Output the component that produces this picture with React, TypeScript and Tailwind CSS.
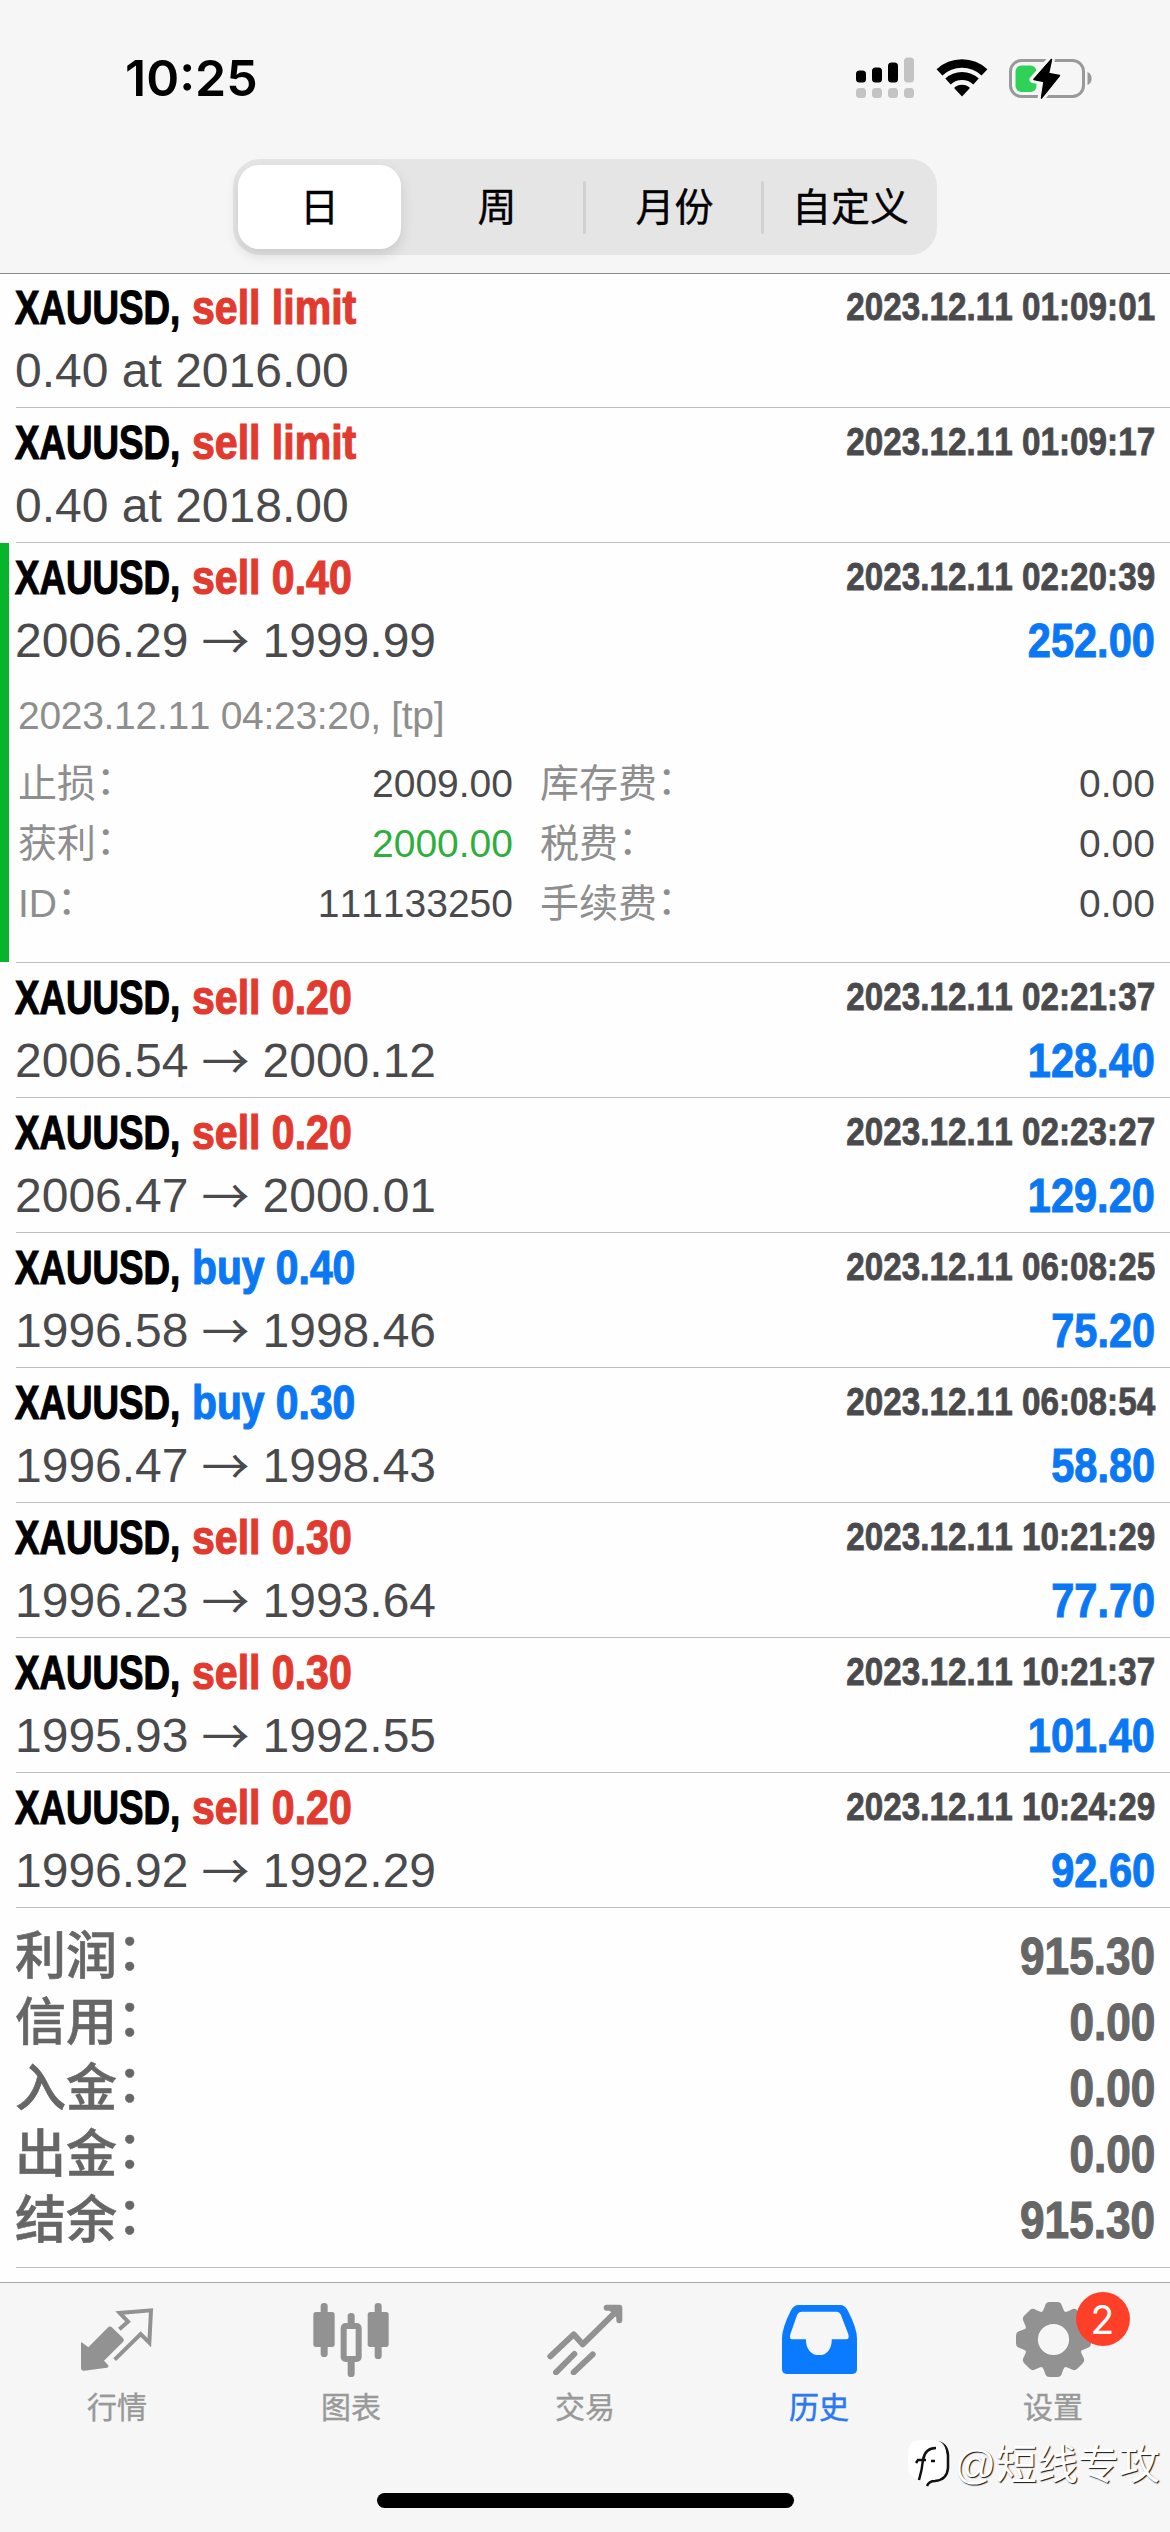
/**
 * Trade history screen.
 *
 * Period switch on top, list of closed orders and deals, the account
 * summary and the bottom tab bar.
 */

import type { ReactNode } from 'react';

interface Deal {
  action: string;
  side: 'buy' | 'sell';
  time: string;
  open?: string;
  close?: string;
  note?: string;
  profit?: string;
  expanded?: boolean;
}

const DEALS: Deal[] = [
  { action: 'sell limit', side: 'sell', time: '2023.12.11 01:09:01', note: '0.40 at 2016.00' },
  { action: 'sell limit', side: 'sell', time: '2023.12.11 01:09:17', note: '0.40 at 2018.00' },
  { action: 'sell 0.40', side: 'sell', time: '2023.12.11 02:20:39', open: '2006.29', close: '1999.99', profit: '252.00', expanded: true },
  { action: 'sell 0.20', side: 'sell', time: '2023.12.11 02:21:37', open: '2006.54', close: '2000.12', profit: '128.40' },
  { action: 'sell 0.20', side: 'sell', time: '2023.12.11 02:23:27', open: '2006.47', close: '2000.01', profit: '129.20' },
  { action: 'buy 0.40', side: 'buy', time: '2023.12.11 06:08:25', open: '1996.58', close: '1998.46', profit: '75.20' },
  { action: 'buy 0.30', side: 'buy', time: '2023.12.11 06:08:54', open: '1996.47', close: '1998.43', profit: '58.80' },
  { action: 'sell 0.30', side: 'sell', time: '2023.12.11 10:21:29', open: '1996.23', close: '1993.64', profit: '77.70' },
  { action: 'sell 0.30', side: 'sell', time: '2023.12.11 10:21:37', open: '1995.93', close: '1992.55', profit: '101.40' },
  { action: 'sell 0.20', side: 'sell', time: '2023.12.11 10:24:29', open: '1996.92', close: '1992.29', profit: '92.60' },
];

const DETAILS = [
  ['止损', '2009.00', '库存费', '0.00'],
  ['获利', '2000.00', '税费', '0.00'],
  ['ID', '111133250', '手续费', '0.00'],
];

const SUMMARY = [
  ['利润', '915.30'],
  ['信用', '0.00'],
  ['入金', '0.00'],
  ['出金', '0.00'],
  ['结余', '915.30'],
];

export default function App() {
  return (
    <div className="relative flex h-[2532px] w-[1170px] flex-col overflow-hidden bg-[#fefefe] font-['Liberation_Sans','Noto_Sans_CJK_SC',sans-serif] text-[#4a4a4d] [font-kerning:none]">
      <header className="h-[274px] shrink-0 border-b border-[#8a8a8d] bg-[#f6f6f6] pt-12">
        <StatusBar />
        <PeriodSwitch />
      </header>

      <main className="-mt-px flex-1">
        {DEALS.map((deal) => (
          <DealRow key={deal.time} deal={deal} />
        ))}
        <section className="px-[15px] pt-4 pb-[13px] text-[51px] leading-[66px] text-[#666]">
          {SUMMARY.map(([label, value]) => (
            <div key={label} className="flex justify-between">
              <span className="font-medium [-webkit-text-stroke-width:0.6px]">
                <Label text={label} />
              </span>
              <span className="origin-right scale-x-[0.865] font-bold [-webkit-text-stroke-width:1.2px]">
                {value}
              </span>
            </div>
          ))}
        </section>
        <Divider />
      </main>

      <TabBar />
      <Watermark />
    </div>
  );
}

function StatusBar() {
  return (
    <div className="flex h-15 items-center pr-[78px] pl-[125px]">
      <span className="font-['Inter',sans-serif] text-[50px] leading-[60px] font-semibold text-black">
        10:25
      </span>
      <svg className="ml-auto" width="58" height="42" viewBox="0 0 58 42">
        <g fill="#000">
          <rect x="0" y="13.5" width="10" height="12" rx="3.5" />
          <rect x="16" y="10.5" width="10" height="15" rx="3.5" />
          <rect x="32" y="5.5" width="10" height="20" rx="3.5" />
        </g>
        <g fill="#c3c3c3">
          <rect x="48" y="0.5" width="10" height="25" rx="3.5" />
          <rect x="0" y="31" width="10" height="10" rx="3.5" />
          <rect x="16" y="31" width="10" height="10" rx="3.5" />
          <rect x="32" y="31" width="10" height="10" rx="3.5" />
          <rect x="48" y="31" width="10" height="10" rx="3.5" />
        </g>
      </svg>
      <svg className="ml-[22px]" width="52" height="40" viewBox="0 0 52 40" fill="none" stroke="#000">
        <path d="M3.5 14.4A33 33 0 0 1 48.5 14.4" strokeWidth="8.6" />
        <path d="M12 23.5A20.5 20.5 0 0 1 40 23.5" strokeWidth="8" />
        <path d="M26 38.5L18.5 30.5Q18 29.500 19 29A12 12 0 0 1 33 29Q34 29.500 33.500 30.500Z" fill="#000" stroke="none" />
      </svg>
      <svg className="ml-5" width="84" height="43" viewBox="0 0 84 43">
        <rect x="2.5" y="3.5" width="73" height="36" rx="11" fill="none" stroke="#99999b" strokeWidth="3" />
        <path d="M79.5 15c5.5 2 5.5 11 0 13Z" fill="#99999b" />
        <rect x="7.5" y="8.5" width="21" height="26.5" rx="6" fill="#30d158" />
        <path
          d="M43.5 1.5L25 22.5L36 24.5L33 41.5L52 18.5L40.5 16.5Z"
          fill="#000"
          stroke="#f6f6f6"
          strokeWidth="7"
          strokeLinejoin="round"
          paintOrder="stroke"
        />
        <path
          d="M43.5 2.5L26 22.5L36 24.5L33.5 41L51.5 18.5L40.5 16.5Z"
          stroke="#000"
          strokeWidth="1.5"
          strokeLinejoin="round"
        />
      </svg>
    </div>
  );
}

function PeriodSwitch() {
  return (
    <div className="mx-auto mt-[51px] flex h-24 w-[704px] items-center rounded-[27px] bg-[#e5e5e6] text-center text-[39px] leading-[56px] text-black [-webkit-text-stroke-width:0.4px]">
      <div className="ml-[5px] flex h-[84px] w-[163px] items-center justify-center rounded-[21px] bg-white pt-0.5 shadow-[0_6px_14px_rgba(0,0,0,0.12)]">
        日
      </div>
      <div className="ml-2.5 flex-1 pt-0.5">周</div>
      <div className="h-[53px] w-[3px] rounded-full bg-[#d1d1d3]" />
      <div className="w-[175px] pt-0.5 pl-0.5">月份</div>
      <div className="h-[53px] w-[3px] rounded-full bg-[#d1d1d3]" />
      <div className="w-[173px] pt-0.5">自定义</div>
    </div>
  );
}

function Divider() {
  return <div className="ml-4 h-px bg-[#bdbdc0]" />;
}

// The full-width colon is lifted to sit at the middle of the characters.
function Label({ text }: { text: string }) {
  return (
    <>
      {text}
      <span className="inline-block -translate-y-[0.07em]">：</span>
    </>
  );
}

function DealRow({ deal }: { deal: Deal }) {
  return (
    <>
      <article
        className={
          deal.expanded
            ? 'h-[419px] border-l-[9px] border-[#07b52c] pt-[3px] pr-[15px] pl-1.5'
            : 'h-[134px] pt-[3px] pr-[15px] pl-[15px]'
        }
      >
        <div className="flex h-[63px] text-[48px] leading-[63px] font-bold whitespace-nowrap [-webkit-text-stroke-width:1.2px]">
          <span className="w-[177px] origin-left scale-x-[0.765] text-black">XAUUSD,</span>
          <span
            className={
              deal.side === 'buy'
                ? 'origin-left scale-x-[0.85] text-[#0a78f5]'
                : 'origin-left scale-x-[0.855] text-[#e23a2e]'
            }
          >
            {deal.action}
          </span>
          <time className="ml-auto origin-right scale-x-[0.853] text-[39px] leading-[61px] [-webkit-text-stroke-width:0.8px]">
            {deal.time}
          </time>
        </div>
        <div className="flex h-[63px] text-[48px] leading-[63px] whitespace-nowrap">
          {deal.note ?? (
            <>
              <span>{deal.open}</span>
              <span className="mx-[13px] w-12 -translate-y-0.5 text-center font-['Noto_Sans_CJK_SC',sans-serif]">
                →
              </span>
              <span>{deal.close}</span>
            </>
          )}
          {deal.profit && (
            <span className="ml-auto origin-right scale-x-[0.865] font-bold text-[#0a78f5] [-webkit-text-stroke-width:1px]">
              {deal.profit}
            </span>
          )}
        </div>
        {deal.expanded && <DealDetails />}
      </article>
      <Divider />
    </>
  );
}

function DealDetails() {
  return (
    <div className="mt-3.5 pl-[3px] text-[39px] leading-[60px] text-[#8e8e8e]">
      <p className="mb-2 tracking-[-0.3px]">2023.12.11 04:23:20, [tp]</p>
      {DETAILS.map(([label, value, feeLabel, fee]) => (
        <div key={label} className="flex">
          <span>
            <Label text={label} />
          </span>
          <span
            className={
              label === '获利' ? 'ml-auto text-[#2fae3e]' : 'ml-auto text-[#4a4a4d]'
            }
          >
            {value}
          </span>
          <div className="ml-[27px] flex w-[615px] justify-between">
            <span>
              <Label text={feeLabel} />
            </span>
            <span className="text-[#4a4a4d]">{fee}</span>
          </div>
        </div>
      ))}
    </div>
  );
}

function TabBar() {
  return (
    <footer className="flex h-[250px] shrink-0 flex-col items-center border-t border-[#a7a7aa] bg-[#f6f6f6]">
      <nav className="flex h-[210px] w-full pt-[19px]">
        <Tab label="行情">
          <svg width="73" height="66" viewBox="0 0 219 198" fill="#929292">
            <path d="M0 108Q0 104 5 108L22 121L80 62Q87 55 94 62L125 92Q132 99 125 106L69 161L81 174Q85 180 78 182L10 191Q0 192 0 183Z" />
            <path
              d="M115 67L141 44L116 18L210 10L205 107L179 81L101 158"
              fill="none"
              stroke="#929292"
              strokeWidth="12"
            />
          </svg>
        </Tab>
        <Tab label="图表">
          <svg width="76" height="74" viewBox="0 0 226 222" fill="#929292">
            <rect x="22" width="21" height="162" rx="10" />
            <rect y="27" width="64" height="105" rx="8" />
            <rect x="184" width="21" height="168" rx="10" />
            <rect x="163" y="27" width="63" height="105" rx="8" />
            <rect x="103" y="30" width="21" height="50" rx="10" />
            <rect x="103" y="165" width="21" height="57" rx="10" />
            <rect x="91" y="69" width="45" height="99" rx="6" fill="#f6f6f6" stroke="#929292" strokeWidth="18" />
          </svg>
        </Tab>
        <Tab label="交易">
          <svg
            width="76"
            height="71"
            viewBox="0 0 228 213"
            fill="none"
            stroke="#929292"
            strokeWidth="18"
            strokeLinecap="round"
            strokeLinejoin="round"
          >
            <path d="M10 157L80 91L107 121L214 16" />
            <path d="M179 11H216V48Z" fill="#929292" strokeWidth="0" />
            <path d="M179 11H217V49" />
            <path d="M27 205L82 150M80 205L137 151" />
          </svg>
        </Tab>
        <Tab label="历史" active>
          <svg width="75" height="69" viewBox="0 0 226 208" fill="#0a7aff">
            <path
              fillRule="evenodd"
              d="M50 0H175Q190 0 199 18Q226 70 226 100V194Q226 208 212 208H14Q0 208 0 194V100Q0 70 26 18Q35 0 50 0ZM60 20Q50 20 46 29L25 88Q21 103 30 103H72C72 134 88 151 112 151C135 151 150 134 150 103H194Q204 103 200 88L177 29Q173 20 165 20Z"
            />
          </svg>
        </Tab>
        <Tab label="设置" badge="2">
          <svg width="75" height="75" viewBox="-113 -113 226 226" fill="#929292">
            {[0, 45, 90, 135, 180, 225, 270, 315].map((deg) => (
              <path
                key={deg}
                transform={`rotate(${deg})`}
                d="M-38 -78Q-30 -86 -26 -100Q-23 -113 -12 -113H12Q23 -113 26 -100Q30 -86 38 -78Z"
              />
            ))}
            <path
              fillRule="evenodd"
              d="M0 -89A89 89 0 1 1 0 89A89 89 0 1 1 0 -89ZM0 -47A47 47 0 1 0 0 47A47 47 0 1 0 0 -47Z"
            />
          </svg>
        </Tab>
      </nav>
      <div className="h-[15px] w-[417px] rounded-full bg-black" />
    </footer>
  );
}

interface TabProps {
  label: string;
  active?: boolean;
  badge?: string;
  children: ReactNode;
}

function Tab({ label, active, badge, children }: TabProps) {
  return (
    <div className="flex flex-1 flex-col items-center">
      <div className="relative flex h-[75px] items-center">
        {children}
        {badge && (
          <span className="absolute -top-[10px] left-[60px] flex size-[54px] items-center justify-center rounded-full bg-[#ff4028] font-['Inter',sans-serif] text-[39px] leading-none text-white">
            {badge}
          </span>
        )}
      </div>
      <span
        className={
          active
            ? 'mt-[13px] text-[30px] leading-9 text-[#2a79f0] [-webkit-text-stroke-width:0.5px]'
            : 'mt-[13px] text-[30px] leading-9 text-[#999] [-webkit-text-stroke-width:0.4px]'
        }
      >
        {label}
      </span>
    </div>
  );
}

// Author stamp laid over the bottom right corner.
function Watermark() {
  return (
    <div className="absolute right-[10px] bottom-[35px] flex h-16 items-center">
      <svg width="45" height="50" viewBox="0 0 45 50" fill="none">
        <path d="M30 2Q41 3 42 15V28Q41 40 29 41Q23 41 21 46" stroke="#111" strokeWidth="2.5" />
        <path d="M14 0H28Q40 1 40 14V27Q40 39 28 39Q21 40 19 44L14 39Q2 38 2 27V13Q2 1 14 0Z" fill="#fff" />
        <path d="M13 40Q16 30 17 20Q19 8 30 8M10 23L12 20H20M25 21H29" stroke="#111" strokeWidth="2.5" />
      </svg>
      <span className="ml-[3px] text-[41px] leading-[60px] whitespace-nowrap text-white [text-shadow:1px_1px_1px_#111]">
        @短线专攻
      </span>
    </div>
  );
}
